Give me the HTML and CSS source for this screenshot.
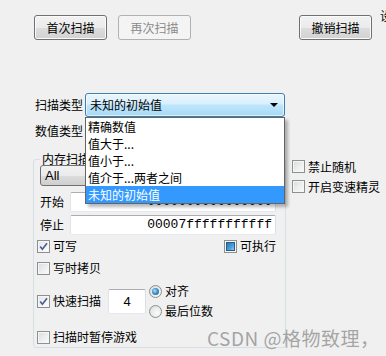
FILE: index.html
```html
<!DOCTYPE html>
<html lang="zh-CN">
<head>
<meta charset="utf-8">
<title>扫描</title>
<link rel="stylesheet" href="styles.css">
</head>
<body>
<div class="app">
  <div class="main">
    <div class="toolbar">
      <button class="btn">首次扫描</button>
      <button class="btn" disabled>再次扫描</button>
      <button class="btn btn-undo">撤销扫描</button>
    </div>

    <div class="field-row scan-type">
      <span class="field-label">扫描类型</span>
      <div class="combo combo-hot">
        <span class="combo-text">未知的初始值</span>
        <span class="combo-arrow"></span>
        <ul class="dropdown">
          <li>精确数值</li>
          <li>值大于...</li>
          <li>值小于...</li>
          <li>值介于...两者之间</li>
          <li class="selected">未知的初始值</li>
        </ul>
      </div>
    </div>

    <div class="field-row value-type">
      <span class="field-label">数值类型</span>
      <div class="combo combo-plain"><span class="combo-text">4 字节</span><span class="combo-arrow"></span></div>
    </div>

    <div class="content">
      <fieldset class="group">
        <legend>内存扫描选项</legend>
        <div class="combo combo-plain combo-all"><span class="combo-text latin">All</span><span class="combo-arrow"></span></div>

        <div class="addr-row first">
          <span class="addr-label">开始</span>
          <div class="textbox mono">0000000000000000</div>
        </div>
        <div class="addr-row">
          <span class="addr-label">停止</span>
          <div class="textbox mono">00007fffffffffff</div>
        </div>

        <div class="check-line writable">
          <label class="check"><span class="cb checked"><svg viewBox="0 0 11 11" width="11" height="11"><path d="M2.2 5.4 L4.4 8.2 L9 2.2" fill="none" stroke="#4a5c96" stroke-width="1.6"/></svg></span>可写</label>
          <label class="check"><span class="cb mixed"><span class="mixed-fill"></span></span>可执行</label>
        </div>
        <div class="check-line cow">
          <label class="check"><span class="cb"></span>写时拷贝</label>
        </div>

        <div class="fast-row">
          <label class="check"><span class="cb checked"><svg viewBox="0 0 11 11" width="11" height="11"><path d="M2.2 5.4 L4.4 8.2 L9 2.2" fill="none" stroke="#4a5c96" stroke-width="1.6"/></svg></span>快速扫描</label>
          <div class="textbox small-box">4</div>
          <div class="radios">
            <label class="radio"><span class="rb on"></span>对齐</label>
            <label class="radio"><span class="rb"></span>最后位数</label>
          </div>
        </div>

        <div class="check-line pause">
          <label class="check"><span class="cb"></span>扫描时暂停游戏</label>
        </div>
      </fieldset>

      <div class="side-options">
        <label class="check"><span class="cb"></span>禁止随机</label>
        <label class="check"><span class="cb"></span>开启变速精灵</label>
      </div>
    </div>
  </div>
  <div class="side">设</div>
</div>
<div class="watermark">CSDN @格物致理，</div>
</body>
</html>
```

FILE: styles.css
```css
html, body {
  margin: 0;
  padding: 0;
}
body {
  width: 386px;
  height: 356px;
  overflow: hidden;
  position: relative;
  background: #f0f0f0;
  font-family: "Noto Sans CJK SC", "Noto Sans", sans-serif;
  font-size: 12px;
  color: #000;
}
.app {
  display: flex;
}
.main {
  width: 380px;
  box-sizing: border-box;
  padding-left: 33px;
  padding-right: 8px;
  flex: none;
}
.side {
  width: 6px;
  overflow: hidden;
  padding-top: 9px;
  line-height: 14px;
  white-space: nowrap;
}

/* toolbar */
.toolbar {
  display: flex;
  gap: 11px;
  padding-top: 15px;
  margin-left: 1px;
}
.btn {
  width: 73px;
  height: 25px;
  box-sizing: border-box;
  padding: 0;
  border: 1px solid #707070;
  border-radius: 3px;
  background: linear-gradient(#f2f2f2 0%, #ebebeb 50%, #dddddd 51%, #d2d2d2 100%);
  box-shadow: inset 0 0 0 1px #fbfbfb;
  font-family: "Noto Sans CJK SC", sans-serif;
  font-size: 12px;
  line-height: 22px;
  color: #000;
}
.btn:disabled {
  border-color: #adb2b5;
  background: #f4f4f4;
  box-shadow: none;
  color: #8a8a8a;
}
.btn-undo {
  margin-left: auto;
}

/* field rows */
.field-row {
  display: flex;
  align-items: center;
}
.field-label {
  width: 50px;
  margin-left: 2px;
  line-height: 16px;
}
.scan-type {
  margin-top: 53px;
  position: relative;
  z-index: 10;
}
.value-type {
  margin-top: 3px;
}

/* combos */
.combo {
  position: relative;
  box-sizing: border-box;
  display: flex;
  align-items: center;
  border-radius: 3px;
}
.combo-hot {
  width: 200px;
  height: 24px;
  border: 1px solid #3c7fb1;
  background: linear-gradient(#eaf6fd 0%, #d9f0fc 45%, #bee6fd 50%, #a7d9f5 100%);
  box-shadow: inset 0 0 0 1px rgba(255,255,255,0.6);
}
.combo-plain {
  width: 200px;
  height: 22px;
  border: 1px solid #707070;
  background: linear-gradient(#f2f2f2 0%, #ebebeb 50%, #dddddd 51%, #cfcfcf 100%);
}
.combo-text {
  flex: 1;
  padding-left: 4px;
  line-height: 16px;
  white-space: nowrap;
}
.latin {
  font-family: "Liberation Sans", "Noto Sans", sans-serif;
  font-size: 13px;
}
.combo-arrow {
  width: 0;
  height: 0;
  margin-right: 6px;
  border-left: 4px solid transparent;
  border-right: 4px solid transparent;
  border-top: 4px solid #000;
}
.dropdown {
  position: absolute;
  left: -1px;
  top: 23px;
  width: 200px;
  margin: 0;
  padding: 0;
  list-style: none;
  background: #fff;
  border: 1px solid #646464;
  box-sizing: border-box;
  box-shadow: 3px 3px 3px rgba(0,0,0,0.28);
}
.dropdown li {
  height: 17px;
  line-height: 17px;
  padding-left: 2px;
  white-space: nowrap;
}
.dropdown li.selected {
  background: #3399ff;
  color: #fff;
}

/* content */
.content {
  display: flex;
  margin-top: 11px;
}
.group {
  margin: 0;
  width: 253px;
  flex: none;
  box-sizing: border-box;
  border: 1px solid #d5dfe5;
  border-radius: 3px;
  padding: 0 0 2px 3px;
  min-inline-size: 0;
}
.group legend {
  padding: 0 2px;
  margin-left: 3px;
  line-height: 12px;
  white-space: nowrap;
}
.combo-all {
  width: 236px;
  height: 21px;
  margin-left: 3px;
}

.addr-row {
  display: flex;
  align-items: center;
  margin-left: 3px;
  margin-top: 3px;
}
.addr-row.first {
  margin-top: 6px;
}
.addr-label {
  width: 30px;
  line-height: 16px;
}
.textbox {
  box-sizing: border-box;
  background: #fff;
  border: 1px solid;
  border-color: #abadb3 #dbdfe6 #e3e9ef #e2e3ea;
  border-radius: 2px;
}
.mono {
  width: 206px;
  height: 20px;
  font-family: "Liberation Mono", "DejaVu Sans Mono", monospace;
  font-size: 13px;
  line-height: 18px;
  text-align: right;
  padding-right: 3px;
}

/* checks */
.check-line {
  display: flex;
  justify-content: space-between;
  width: 239px;
  height: 16px;
  align-items: center;
}
.writable {
  margin-top: 3px;
}
.cow {
  margin-top: 6px;
}
.pause {
  margin-top: 8px;
}
.check, .radio {
  display: flex;
  align-items: center;
  gap: 3px;
  line-height: 16px;
  white-space: nowrap;
}
.cb {
  width: 13px;
  height: 13px;
  box-sizing: border-box;
  border: 1px solid #8e8f8f;
  background: linear-gradient(135deg, #d8dadd 0%, #eceeef 55%, #fbfbfb 100%);
  box-shadow: inset 0 0 0 1px #f6f6f6;
  display: flex;
  align-items: center;
  justify-content: center;
  flex: none;
}
.cb.checked {
  background: linear-gradient(135deg, #e2e4e8 0%, #f3f4f5 60%, #ffffff 100%);
}
.mixed-fill {
  width: 9px;
  height: 9px;
  box-sizing: border-box;
  border: 1px solid #245d90;
  background: linear-gradient(135deg, #2a73b2 0%, #4fa0d8 60%, #8fcaf0 100%);
}

.fast-row {
  display: flex;
  align-items: center;
  height: 40px;
  margin-top: 5px;
}
.small-box {
  width: 38px;
  height: 25px;
  margin-left: 7px;
  text-align: center;
  line-height: 23px;
  font-family: "Liberation Sans", sans-serif;
  font-size: 13px;
}
.radios {
  display: flex;
  flex-direction: column;
  margin-left: 3px;
  gap: 4px;
}
.rb {
  width: 13px;
  height: 13px;
  box-sizing: border-box;
  border-radius: 50%;
  border: 1px solid #8e8f8f;
  background: radial-gradient(circle at 65% 65%, #fbfbfb 0%, #e6e7e8 60%, #cfd1d4 100%);
  display: flex;
  align-items: center;
  justify-content: center;
  flex: none;
}
.rb.on::after {
  content: "";
  width: 7px;
  height: 7px;
  border-radius: 50%;
  background: radial-gradient(circle at 40% 40%, #b8e3fb 0%, #3e94d1 45%, #1c4f80 100%);
}

.side-options {
  display: flex;
  flex-direction: column;
  gap: 3px;
  padding-top: 5px;
  margin-left: 6px;
  flex: none;
}
.side-options .check {
  height: 17px;
}

.watermark {
  position: absolute;
  left: 207px;
  top: 327px;
  font-family: "Noto Sans CJK SC", "Noto Sans", sans-serif;
  font-size: 19px;
  line-height: 22px;
  color: rgba(150,150,150,0.85);
  white-space: nowrap;
  letter-spacing: 0.5px;
}
```
